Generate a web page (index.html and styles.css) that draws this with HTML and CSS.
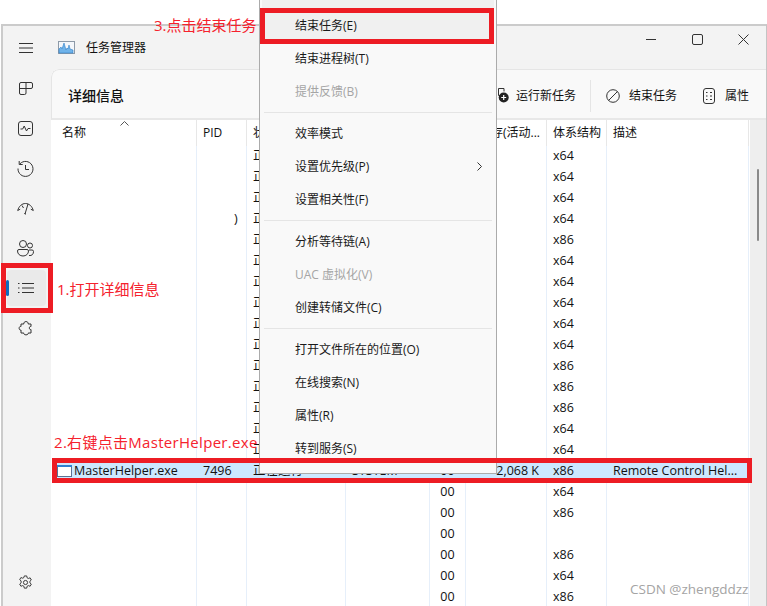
FILE: index.html
```html
<!DOCTYPE html>
<html lang="zh-CN">
<head>
<meta charset="utf-8">
<title>任务管理器</title>
<link rel="stylesheet" href="styles.css">
</head>
<body>
<div class="window">
  <header class="titlebar">
    <button class="nav-btn"><svg width="14" height="10" viewBox="0 0 14 10"><path d="M0 .5h14M0 5h14M0 9.500h14" class="ic"/></svg></button>
    <svg class="app-icon" width="17" height="13" viewBox="0 0 17 13"><rect x=".5" y=".5" width="16" height="12" fill="#f4f7fb" stroke="#8d9aa8"/><path d="M1 12V8l2-2 1 2 2-6 2 7 1-2 1 1 1-4 1 4 3 1v3z" fill="#6fb3ea" stroke="#2f7fc8" stroke-width=".6"/></svg>
    <span class="app-title">任务管理器</span>
    <div class="win-controls">
      <svg width="11" height="11" viewBox="0 0 11 11"><path d="M0 5.500h10" class="ic"/></svg>
      <svg width="11" height="11" viewBox="0 0 11 11"><rect x=".5" y=".5" width="10" height="10" rx="1.500" class="ic"/></svg>
      <svg width="11" height="11" viewBox="0 0 11 11"><path d="M.5.500l10 10M10.500.500l-10 10" class="ic"/></svg>
    </div>
  </header>
  <div class="body">
    <nav class="rail">
      <div class="rail-item"><svg width="14" height="13" viewBox="0 0 14 13"><path d="M2 .5H12a1.500 1.500 0 0 1 1.500 1.500v3A1.500 1.500 0 0 1 12 6.500H7V11a1.500 1.500 0 0 1-1.500 1.500H2A1.500 1.500 0 0 1 .5 11V2A1.500 1.500 0 0 1 2 .5zM7 .5v6M.5 6.500H7" class="ic"/></svg></div>
      <div class="rail-item"><svg width="15" height="15" viewBox="0 0 15 15"><rect x=".5" y=".5" width="14" height="14" rx="2.500" class="ic"/><path d="M2.500 8h2.200l1.500-3 2.300 5 1.500-2.500h2.500" class="ic"/></svg></div>
      <div class="rail-item"><svg width="17" height="17" viewBox="0 0 17 17"><path d="M3 3.800A7.500 7.500 0 1 1 1 8.500M2.200 1v3.500h3.500M8.500 5v4.500H12" class="ic"/></svg></div>
      <div class="rail-item"><svg width="17" height="13" viewBox="0 0 17 13"><path d="M.7 8.500C2 4 5 1.500 8.500 1.500S15 4 16.300 8.500l-2.500-1.300M.7 8.500l2.500-1.300M11 2L8 12M7.300 11.500l1.700.7M5 3.500l1.500 2.500" class="ic"/></svg></div>
      <div class="rail-item"><svg width="17" height="17" viewBox="0 0 17 17"><circle cx="6" cy="4" r="3.500" class="ic"/><circle cx="13" cy="5.500" r="2.500" class="ic"/><path d="M2 9.500h8a1.500 1.500 0 0 1 1.500 1.500c0 3-2.500 5-5.500 5S.5 14 .5 11A1.500 1.500 0 0 1 2 9.500zM12 15.500c3 .5 4.500-1.500 4.500-4A1.500 1.500 0 0 0 15 10h-3" class="ic"/></svg></div>
      <div class="rail-item rail-active"><span class="rail-mark"></span><svg width="16" height="12" viewBox="0 0 16 12"><path d="M4 1.500h12M4 6h12M4 10.500h12" class="ic"/><path d="M0 1.500h1.500M0 6h1.500M0 10.500h1.500" class="ic"/></svg></div>
      <div class="rail-item"><svg class="puzzle" width="16" height="16" viewBox="0 0 16 16"><path d="M3 4H5.800C5.200 .8 10.800 .8 10.200 4H13V6.500C10.800 5.800 10.800 10.200 13 9.500V13H10.200C10.800 15.500 5.200 15.500 5.800 13H3V10C.5 10.700 .5 5.800 3 6.500Z" class="ic"/></svg></div>
      <div class="rail-item rail-bottom"><svg width="15" height="15" viewBox="0 0 16 16"><circle cx="8" cy="8" r="2.200" class="ic"/><path d="M6.700 1h2.600l.4 2 1.300.7 1.900-.7 1.300 2.300-1.500 1.300v1.800l1.500 1.300-1.300 2.300-1.900-.7-1.300.7-.4 2H6.700l-.4-2-1.300-.7-1.900.7-1.300-2.300 1.500-1.300V6.300L1.800 5l1.300-2.300 1.900.7 1.300-.7z" class="ic"/></svg></div>
    </nav>
    <main class="pane">
      <div class="toolbar">
        <h1 class="page-title">详细信息</h1>
        <div class="tools">
          <div class="tool tool-run"><svg width="11" height="15" viewBox="0 0 11 15"><path d="M.5 3V.5h5.500v3M.5 3v4.500h2.500" class="ic"/><circle cx="5.700" cy="9.500" r="5" fill="#222"/><path d="M5.700 7v5M3.200 9.500h5" stroke="#fff" stroke-width="1.200"/></svg><span>运行新任务</span></div>
          <span class="tool-sep"></span>
          <div class="tool tool-end"><svg width="14" height="14" viewBox="0 0 14 14"><circle cx="7" cy="7" r="6.300" class="ic"/><path d="M2.500 11.500l9-9" class="ic"/></svg><span>结束任务</span></div>
          <div class="tool tool-props"><svg width="12" height="16" viewBox="0 0 12 16"><rect x=".5" y=".5" width="11" height="15" rx="2.500" class="ic"/><path d="M3 4.500h1.500M7 4.500h2M3 8h1.500M7 8h2M3 11.500h1.500M7 11.500h2" class="ic"/></svg><span>属性</span></div>
        </div>
      </div>
      <div class="grid-wrap">
        <div class="table">
          <div class="thead row">
            <div class="th name">名称<svg class="caret" width="9" height="5" viewBox="0 0 9 5"><path d="M.5 4.500l4-4 4 4" fill="none" stroke="#555"/></svg></div>
            <div class="th pid">PID</div>
            <div class="th status">状态</div>
            <div class="th user">用户名</div>
            <div class="th cpu">CPU</div>
            <div class="th mem">内存(活动...</div>
            <div class="th arch">体系结构</div>
            <div class="th desc">描述</div>
          </div>
          <div class="row"><div class="name"></div><div class="pid"></div><div class="status">正在</div><div class="user"></div><div class="cpu"></div><div class="mem"></div><div class="arch">x64</div><div class="desc"></div></div>
          <div class="row"><div class="name"></div><div class="pid"></div><div class="status">正在</div><div class="user"></div><div class="cpu"></div><div class="mem"></div><div class="arch">x64</div><div class="desc"></div></div>
          <div class="row"><div class="name"></div><div class="pid"></div><div class="status">正在</div><div class="user"></div><div class="cpu"></div><div class="mem"></div><div class="arch">x64</div><div class="desc"></div></div>
          <div class="row"><div class="name"></div><div class="pid paren">)</div><div class="status">正在</div><div class="user"></div><div class="cpu"></div><div class="mem"></div><div class="arch">x64</div><div class="desc"></div></div>
          <div class="row"><div class="name"></div><div class="pid"></div><div class="status">正在</div><div class="user"></div><div class="cpu"></div><div class="mem"></div><div class="arch">x86</div><div class="desc"></div></div>
          <div class="row"><div class="name"></div><div class="pid"></div><div class="status">正在</div><div class="user"></div><div class="cpu"></div><div class="mem"></div><div class="arch">x64</div><div class="desc"></div></div>
          <div class="row"><div class="name"></div><div class="pid"></div><div class="status">正在</div><div class="user"></div><div class="cpu"></div><div class="mem"></div><div class="arch">x64</div><div class="desc"></div></div>
          <div class="row"><div class="name"></div><div class="pid"></div><div class="status">正在</div><div class="user"></div><div class="cpu"></div><div class="mem"></div><div class="arch">x64</div><div class="desc"></div></div>
          <div class="row"><div class="name"></div><div class="pid"></div><div class="status">正在</div><div class="user"></div><div class="cpu"></div><div class="mem"></div><div class="arch">x64</div><div class="desc"></div></div>
          <div class="row"><div class="name"></div><div class="pid"></div><div class="status">正在</div><div class="user"></div><div class="cpu"></div><div class="mem"></div><div class="arch">x64</div><div class="desc"></div></div>
          <div class="row"><div class="name"></div><div class="pid"></div><div class="status">正在</div><div class="user"></div><div class="cpu"></div><div class="mem"></div><div class="arch">x86</div><div class="desc"></div></div>
          <div class="row"><div class="name"></div><div class="pid"></div><div class="status">正在</div><div class="user"></div><div class="cpu"></div><div class="mem"></div><div class="arch">x86</div><div class="desc"></div></div>
          <div class="row"><div class="name"></div><div class="pid"></div><div class="status">正在</div><div class="user"></div><div class="cpu"></div><div class="mem"></div><div class="arch">x86</div><div class="desc"></div></div>
          <div class="row"><div class="name"></div><div class="pid"></div><div class="status">正在</div><div class="user"></div><div class="cpu"></div><div class="mem"></div><div class="arch">x64</div><div class="desc"></div></div>
          <div class="row"><div class="name"></div><div class="pid"></div><div class="status">正在</div><div class="user"></div><div class="cpu"></div><div class="mem"></div><div class="arch">x64</div><div class="desc"></div></div>
          <div class="row selected"><div class="name"><svg class="exe-icon" width="15" height="12" viewBox="0 0 15 12"><rect x=".5" y=".5" width="14" height="11" fill="#fff" stroke="#5b7192"/><rect x="0" y="0" width="15" height="2" fill="#2f7fd0"/></svg>MasterHelper.exe</div><div class="pid">7496</div><div class="status">正在运行</div><div class="user">SYSTEM</div><div class="cpu">00</div><div class="mem">2,068 K</div><div class="arch">x86</div><div class="desc">Remote Control Hel...</div></div>
          <div class="row"><div class="name"></div><div class="pid"></div><div class="status"></div><div class="user"></div><div class="cpu">00</div><div class="mem"></div><div class="arch">x64</div><div class="desc"></div></div>
          <div class="row"><div class="name"></div><div class="pid"></div><div class="status"></div><div class="user"></div><div class="cpu">00</div><div class="mem"></div><div class="arch">x86</div><div class="desc"></div></div>
          <div class="row"><div class="name"></div><div class="pid"></div><div class="status"></div><div class="user"></div><div class="cpu">00</div><div class="mem"></div><div class="arch"></div><div class="desc"></div></div>
          <div class="row"><div class="name"></div><div class="pid"></div><div class="status"></div><div class="user"></div><div class="cpu">00</div><div class="mem"></div><div class="arch">x86</div><div class="desc"></div></div>
          <div class="row"><div class="name"></div><div class="pid"></div><div class="status"></div><div class="user"></div><div class="cpu">00</div><div class="mem"></div><div class="arch">x64</div><div class="desc"></div></div>
          <div class="row"><div class="name"></div><div class="pid"></div><div class="status"></div><div class="user"></div><div class="cpu">00</div><div class="mem"></div><div class="arch">x86</div><div class="desc"></div></div>
        </div>
        <div class="scrollbar"><span class="thumb"></span></div>
      </div>
    </main>
  </div>
</div>

<div class="menu">
  <div class="mi mi-hot">结束任务(E)</div>
  <div class="mi">结束进程树(T)</div>
  <div class="mi mi-off">提供反馈(B)</div>
  <div class="msep"></div>
  <div class="mi">效率模式</div>
  <div class="mi mi-sub">设置优先级(P)<svg width="5" height="9" viewBox="0 0 5 9"><path d="M.5.500l4 4-4 4" fill="none" stroke="#333"/></svg></div>
  <div class="mi">设置相关性(F)</div>
  <div class="msep"></div>
  <div class="mi">分析等待链(A)</div>
  <div class="mi mi-off">UAC 虚拟化(V)</div>
  <div class="mi">创建转储文件(C)</div>
  <div class="msep"></div>
  <div class="mi">打开文件所在的位置(O)</div>
  <div class="mi">在线搜索(N)</div>
  <div class="mi">属性(R)</div>
  <div class="mi">转到服务(S)</div>
</div>

<span class="note note-3">3.点击结束任务</span>
<span class="note note-1">1.打开详细信息</span>
<span class="note note-2">2.右键点击MasterHelper.exe</span>
<span class="box box-end"></span>
<span class="box box-nav"></span>
<span class="box box-row"></span>
<span class="watermark">CSDN @zhengddzz</span>
</body>
</html>
```

FILE: styles.css
```css
* { box-sizing: border-box; margin: 0; padding: 0; }
html, body { height: 606px; overflow: hidden; background: #fff; }
body {
  position: relative;
  padding: 24px 0 0 1px;
  font: 12px/1 "Open Sans", "Noto Sans CJK SC", sans-serif;
  color: #111;
}
svg { display: block; }
.ic { fill: none; stroke: #333; stroke-width: 1; stroke-linejoin: round; }
.window {
  height: 582px;
  display: flex;
  flex-direction: column;
  background: #f3f3f3;
  border-top: 2px solid #cbcbcb;
  border-left: 2px solid #cbcbcb;
  border-right: 1px solid #c4c4c4;
}
.titlebar { height: 43px; flex: none; display: flex; align-items: center; }
.nav-btn { width: 46px; height: 43px; border: 0; background: none; display: flex; align-items: center; justify-content: center; }
.app-icon { margin-left: 9px; }
.app-title { margin-left: 11px; font-size: 12px; }
.win-controls { margin-left: auto; align-self: flex-start; padding-top: 8px; padding-right: 17px; display: flex; gap: 35px; }
.body { flex: 1; display: flex; min-height: 0; }
.rail { width: 48px; flex: none; display: flex; flex-direction: column; align-items: flex-start; padding: 1px 0 6px 4px; }
.rail-item { width: 39px; height: 36px; margin-bottom: 4px; padding-right: 2px; display: flex; align-items: center; justify-content: center; position: relative; border-radius: 4px; }
.rail-active { background: #eaeaea; }
.rail-mark { position: absolute; left: -1px; top: 10px; width: 3px; height: 16px; border-radius: 2px; background: #0f6cbd; }
.rail-bottom { margin-top: auto; margin-bottom: 0; }
.pane { flex: 1; min-width: 0; display: flex; flex-direction: column; background: #fff; border-top-left-radius: 8px; overflow: hidden; }
.toolbar { height: 51px; flex: none; display: flex; align-items: center; justify-content: space-between; padding: 3px 17px 0 16px; background: #f9f9f9; border-top: 1px solid #e5e5e5; border-left: 1px solid #e5e5e5; border-bottom: 2px solid #e8e8e8; border-top-left-radius: 8px; }
.page-title { font-size: 14px; font-weight: 500; }
.tools { display: flex; align-items: center; }
.tool { display: flex; align-items: center; }
.tool-run { gap: 7px; }
.tool-end { gap: 9px; margin-left: 15px; }
.tool-props { gap: 10px; margin-left: 26px; }
.tool-sep { width: 1px; height: 32px; background: #e5e5e5; margin-left: 14px; }
.grid-wrap { flex: 1; min-height: 0; display: flex; overflow: hidden; padding-left: 1px; }
.table { width: 697px; flex: none; }
.row { display: grid; grid-template-columns: 145px 50px 99px 84px 36px 81px 60px 142px; height: 21px; align-items: stretch; }
.row > div { padding: 0 6px; line-height: 21px; border-right: 1px solid #e6effa; white-space: nowrap; overflow: hidden; font-size: 12.500px; }
.thead { height: 25px; }
.thead > .th { line-height: 26px; border-right: 1px solid #e7e7e7; position: relative; font-size: 12px; overflow: visible; }
.thead > .name { padding-left: 10px; }
.caret { position: absolute; left: 68px; top: 1px; }
.mem { text-align: right; }
.row > .mem { padding-right: 7px; }
.thead > .mem { text-align: left; padding-left: 13px; padding-right: 0; overflow: hidden; }
.cpu { text-align: center; }
.row > .paren { padding-left: 37px; }
.selected { background: #cce8ff; }
.selected > div { border-right-color: #cce8ff; }
.row > .name:has(.exe-icon) { display: flex; align-items: center; gap: 2px; padding-left: 5px; }
.scrollbar { flex: 1; margin-left: 1px; background: #eeeeee; position: relative; }
.thumb { position: absolute; left: 7px; top: 49px; width: 2px; height: 72px; background: #8a8a8a; border-radius: 1px; }
.menu { position: absolute; left: 259px; top: 0; width: 238px; height: 474px; background: #f9f9f9; border: 1px solid #ababab; border-top: 0; padding: 9px 0 0 0; }
.mi { height: 33px; line-height: 33px; padding-left: 35px; font-size: 12px; color: #1a1a1a; position: relative; }
.mi-hot { background: #f0f0f0; margin: -9px 2px 0; padding-left: 33px; height: 42px; line-height: 52px; }
.mi-off { color: #a5a5a5; }
.mi-sub svg { position: absolute; right: 14px; top: 12px; }
.msep { height: 1px; background: #e5e5e5; margin: 4px 4px 4px; }
.note { position: absolute; color: #f5222d; font-size: 15px; line-height: 20px; white-space: nowrap; }
.note-3 { left: 154px; top: 15px; }
.note-1 { left: 57px; top: 279px; }
.note-2 { left: 54px; top: 432px; letter-spacing: .3px; }
.box { position: absolute; border: 5px solid #ed1c24; }
.box-end { left: 260px; top: 8px; width: 234px; height: 36px; }
.box-nav { left: 1px; top: 263px; width: 52px; height: 50px; }
.box-row { left: 52px; top: 458px; width: 700px; height: 25px; }
.watermark { position: absolute; left: 630px; top: 581px; font-size: 13.500px; line-height: 16px; color: #a4a4a4; background: rgba(255,255,255,.6); }
```
